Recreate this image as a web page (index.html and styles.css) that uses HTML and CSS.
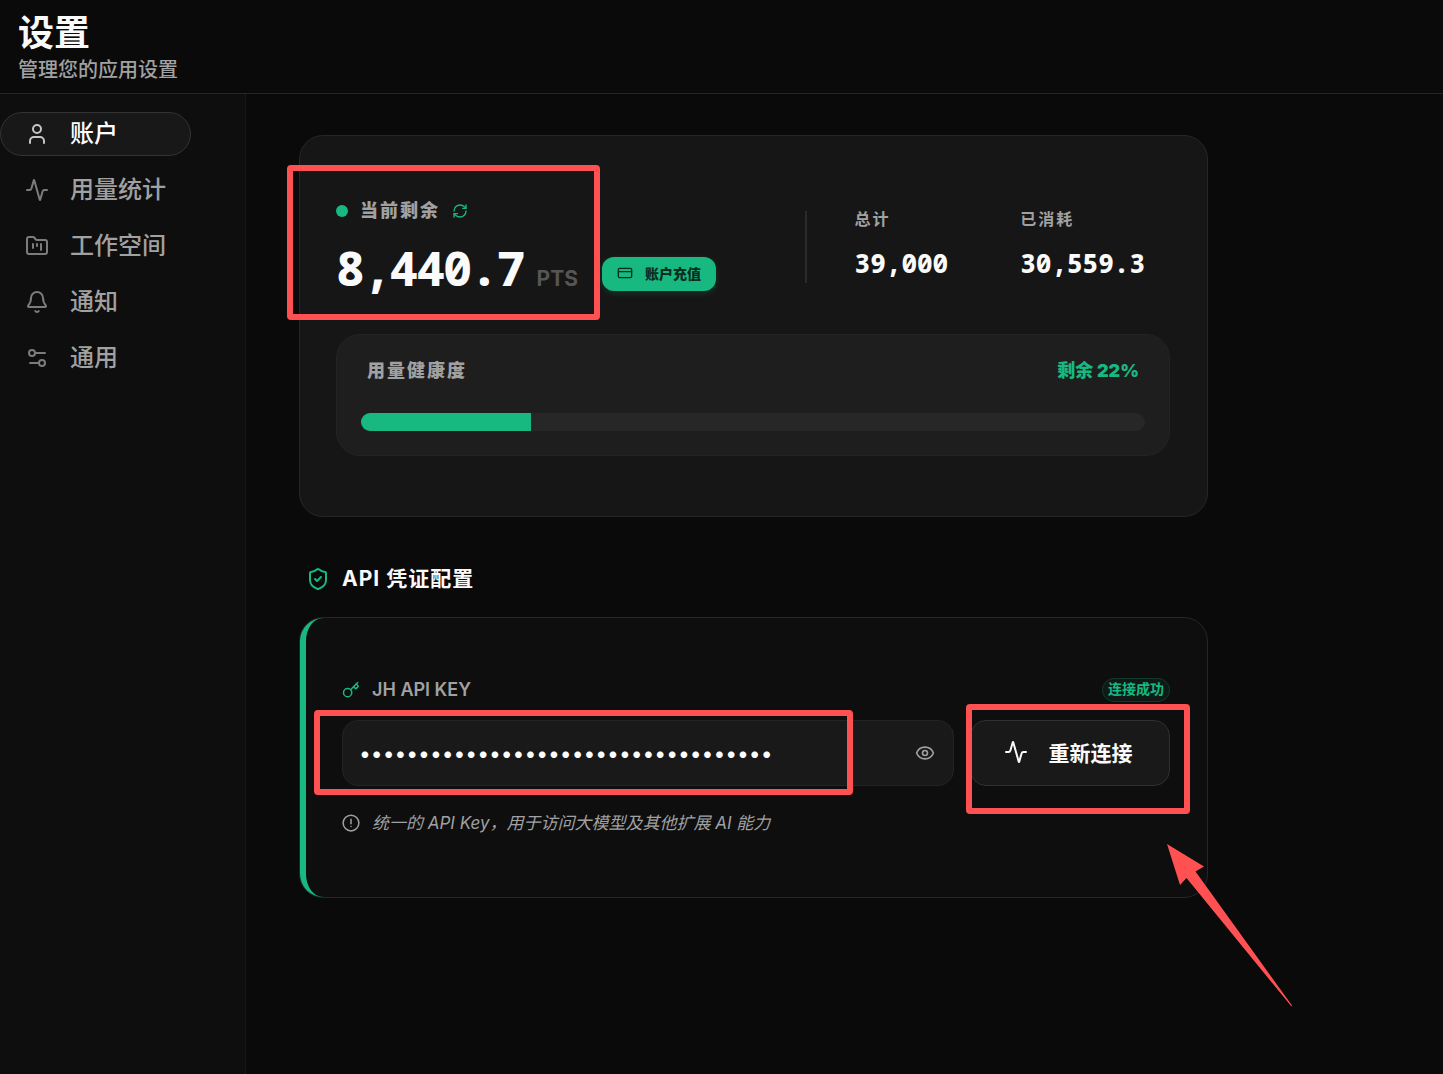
FILE: index.html
```html
<!DOCTYPE html>
<html lang="zh-CN">
<head>
<meta charset="utf-8">
<meta name="viewport" content="width=device-width, initial-scale=1">
<title>设置</title>
<link rel="stylesheet" href="styles.css">
</head>
<body>
<header class="header">
  <h1 class="title">设置</h1>
  <p class="subtitle">管理您的应用设置</p>
</header>
<div class="layout">
  <nav class="sidebar">
    <a class="nav-item nav-item-active" href="#account">
      <svg class="icon icon-lg" viewBox="0 0 24 24"><circle cx="12" cy="7" r="4"/><path d="M19 21v-2a4 4 0 0 0-4-4H9a4 4 0 0 0-4 4v2"/></svg>
      账户
    </a>
    <a class="nav-item" href="#usage">
      <svg class="icon icon-lg" viewBox="0 0 24 24"><path d="M22 12h-2.500a2 2 0 0 0-1.930 1.460l-2.350 8.360a.25.25 0 0 1-.48 0L9.240 2.180a.25.25 0 0 0-.48 0l-2.350 8.360A2 2 0 0 1 4.490 12H2"/></svg>
      用量统计
    </a>
    <a class="nav-item" href="#workspace">
      <svg class="icon icon-lg" viewBox="0 0 24 24"><path d="M4 20h16a2 2 0 0 0 2-2V8a2 2 0 0 0-2-2h-7.930a2 2 0 0 1-1.660-.9l-.82-1.200A2 2 0 0 0 7.930 3H4a2 2 0 0 0-2 2v13c0 1.100.9 2 2 2Z"/><path d="M8 10v4M12 10v2M16 10v6"/></svg>
      工作空间
    </a>
    <a class="nav-item" href="#notifications">
      <svg class="icon icon-lg" viewBox="0 0 24 24"><path d="M10.268 21a2 2 0 0 0 3.464 0"/><path d="M3.262 15.326A1 1 0 0 0 4 17h16a1 1 0 0 0 .74-1.673C19.410 13.956 18 12.499 18 8A6 6 0 0 0 6 8c0 4.499-1.411 5.956-2.738 7.326"/></svg>
      通知
    </a>
    <a class="nav-item" href="#general">
      <svg class="icon icon-lg" viewBox="0 0 24 24"><path d="M20 7h-9M14 17H5"/><circle cx="17" cy="17" r="3"/><circle cx="7" cy="7" r="3"/></svg>
      通用
    </a>
  </nav>
  <main class="main">
    <section class="card balance-card">
      <div class="balance-row">
        <div class="balance">
          <div class="balance-head">
            <span class="dot"></span>
            <span class="label label-strong">当前剩余</span>
            <button class="refresh" type="button" aria-label="刷新">
              <svg class="icon icon-xs" viewBox="0 0 24 24"><path d="M3 12a9 9 0 0 1 9-9 9.750 9.750 0 0 1 6.740 2.740L21 8"/><path d="M21 3v5h-5"/><path d="M21 12a9 9 0 0 1-9 9 9.750 9.750 0 0 1-6.740-2.740L3 16"/><path d="M8 16H3v5"/></svg>
            </button>
          </div>
          <div class="balance-line">
            <span class="amount">8,440.7</span>
            <span class="unit">PTS</span>
            <button class="recharge" type="button">
              <svg class="icon icon-xs" viewBox="0 0 24 24"><rect x="2" y="5" width="20" height="14" rx="2"/><path d="M2 10h20"/></svg>
              账户充值
            </button>
          </div>
        </div>
        <dl class="stats">
          <div class="stat"><dt class="stat-label">总计</dt><dd class="stat-value">39,000</dd></div>
          <div class="stat"><dt class="stat-label">已消耗</dt><dd class="stat-value">30,559.3</dd></div>
        </dl>
      </div>
      <div class="health">
        <div class="health-head">
          <span class="label label-strong">用量健康度</span>
          <span class="health-value">剩余 22%</span>
        </div>
        <div class="bar"><div class="bar-fill" style="width:21.64%"></div></div>
      </div>
    </section>

    <h2 class="section-title">
      <svg class="icon icon-lg" viewBox="0 0 24 24"><path d="M20 13c0 5-3.500 7.500-7.660 8.950a1 1 0 0 1-.67-.01C7.500 20.500 4 18 4 13V6a1 1 0 0 1 1-1c2 0 4.500-1.200 6.240-2.720a1.170 1.170 0 0 1 1.520 0C14.510 3.810 17 5 19 5a1 1 0 0 1 1 1z"/><path d="m9 12 2 2 4-4"/></svg>
      API 凭证配置
    </h2>

    <section class="card api-card">
      <div class="api-body">
        <div class="key-head">
          <svg class="icon icon-sm key-icon" viewBox="0 0 24 24"><path d="m15.500 7.500 2.300 2.300a1 1 0 0 0 1.400 0l2.100-2.100a1 1 0 0 0 0-1.400L19 4"/><path d="m21 2-9.600 9.600"/><circle cx="7.500" cy="15.500" r="5.500"/></svg>
          <label class="key-label" for="api-key">JH API KEY</label>
          <span class="badge">连接成功</span>
        </div>
        <div class="key-row">
          <div class="field">
            <input class="key-input" id="api-key" type="password" value="12345678901234567890123456789012345">
            <button class="eye" type="button" aria-label="显示密钥">
              <svg class="icon icon-md" viewBox="0 0 24 24"><path d="M2.062 12.348a1 1 0 0 1 0-.696 10.750 10.750 0 0 1 19.876 0 1 1 0 0 1 0 .696 10.750 10.750 0 0 1-19.876 0"/><circle cx="12" cy="12" r="3"/></svg>
            </button>
          </div>
          <button class="reconnect" type="button">
            <svg class="icon icon-lg" viewBox="0 0 24 24"><path d="M22 12h-2.500a2 2 0 0 0-1.930 1.460l-2.350 8.360a.25.25 0 0 1-.48 0L9.240 2.180a.25.25 0 0 0-.48 0l-2.350 8.360A2 2 0 0 1 4.490 12H2"/></svg>
            重新连接
          </button>
        </div>
        <p class="hint">
          <svg class="icon icon-sm" viewBox="0 0 24 24"><circle cx="12" cy="12" r="10.500"/><path d="M12 7v6M12 16.500v.1"/></svg>
          <span class="hint-text">统一的 API Key，用于访问大模型及其他扩展 AI 能力</span>
        </p>
      </div>
    </section>

    <svg class="marks" width="1100" height="940" viewBox="0 0 1100 940" aria-hidden="true">
      <g class="mark-box">
        <rect x="44" y="74" width="307" height="149" rx="1"/>
        <rect x="71" y="619" width="533" height="79" rx="1"/>
        <rect x="723" y="613" width="218" height="104" rx="1"/>
      </g>
      <path class="mark-arrow" d="M921 750 958 772.500 949.500 777.500 1046 911.500 1045.500 912.500 940.500 784 934 791Z"/>
    </svg>
  </main>
</div>
</body>
</html>
```
FILE: styles.css
```css
:root {
  --green: #18b981;
  --muted: #a1a1a1;
  --line: #262626;
  --sans: Inter, "Noto Sans CJK SC", sans-serif;
  --mono: Consolas, "Noto Sans Mono", "DejaVu Sans Mono", monospace;
}

* { box-sizing: border-box; }

body {
  display: flex;
  flex-direction: column;
  min-height: 100vh;
  margin: 0;
  background: #0a0a0a;
  color: #fafafa;
  font-family: var(--sans);
}

h1, h2, p, dl, dd { margin: 0; }

button, input { font-family: inherit; }

button { cursor: pointer; }

.icon {
  flex: none;
  fill: none;
  stroke: currentColor;
  stroke-width: 2;
  stroke-linecap: round;
  stroke-linejoin: round;
}
.icon-xs { width: 16px; height: 16px; }
.icon-sm { width: 18px; height: 18px; }
.icon-md { width: 20px; height: 20px; }
.icon-lg { width: 24px; height: 24px; }

.header {
  padding: 12px 18px 11px;
  border-bottom: 1px solid var(--line);
}
.title {
  margin-bottom: 4px;
  font-size: 36px;
  font-weight: 700;
  line-height: 42px;
}
.subtitle {
  color: var(--muted);
  font-size: 20px;
  font-weight: 500;
  line-height: 24px;
}

.layout {
  display: flex;
  flex: 1;
}

.sidebar {
  display: flex;
  flex: none;
  flex-direction: column;
  gap: 12px;
  width: 246px;
  padding: 18px 54px 18px 0;
  border-right: 1px solid #171717;
  background: #0e0e0e;
}
.nav-item {
  display: flex;
  align-items: center;
  gap: 21px;
  height: 44px;
  padding: 0 24px;
  border: 1px solid transparent;
  border-radius: 22px;
  color: var(--muted);
  font-size: 24px;
  font-weight: 500;
  line-height: 32px;
  text-decoration: none;
}
.nav-item .icon { opacity: 0.75; }
.nav-item-active {
  border-color: #333;
  background: #181818;
  color: #fff;
}

.main {
  position: relative;
  flex: 1;
  min-width: 0;
  padding: 41px 53px;
}

.card {
  max-width: 909px;
  border: 1px solid var(--line);
  border-radius: 24px;
}

.balance-card {
  padding: 60px 37px 60px 36px;
  background: #161616;
}
.balance-row {
  display: flex;
  justify-content: space-between;
}
.balance-head {
  display: flex;
  align-items: center;
  height: 30px;
}
.dot {
  width: 12px;
  height: 12px;
  margin-right: 12px;
  border-radius: 50%;
  background: var(--green);
}
.label {
  color: var(--muted);
  font-size: 18px;
  line-height: 24px;
  letter-spacing: 2px;
}
.label-strong { font-weight: 900; }
.refresh {
  display: flex;
  margin-left: 12px;
  padding: 0;
  border: 0;
  background: none;
  color: var(--green);
}
.balance-line {
  display: flex;
  align-items: baseline;
  height: 72px;
  padding-top: 14px;
}
.amount {
  font-family: var(--mono);
  font-size: 48px;
  font-weight: 800;
  line-height: 56px;
  letter-spacing: -2px;
}
.unit {
  margin-left: 13px;
  color: #555;
  font-size: 21px;
  font-weight: 700;
}
.recharge {
  display: flex;
  align-items: center;
  align-self: flex-end;
  gap: 12px;
  height: 34px;
  margin: 0 0 7px 24px;
  padding: 0 15px 2px;
  border: 0;
  border-radius: 12px;
  background: var(--green);
  box-shadow: 0 2px 6px #18b98133;
  color: #0a2e22;
  font-size: 14px;
  font-weight: 900;
}
.stats {
  display: flex;
  align-self: center;
  gap: 72px;
  height: 72px;
  padding: 0 25px 0 48px;
  border-left: 2px solid #2a2a2a;
}
.stat-label {
  margin-bottom: 20px;
  color: var(--muted);
  font-size: 16px;
  font-weight: 700;
  line-height: 16px;
  letter-spacing: 2px;
}
.stat-value {
  font-family: var(--mono);
  font-size: 26px;
  font-weight: 800;
  line-height: 32px;
}

.health {
  margin-top: 36px;
  padding: 24px;
  border: 1px solid #232323;
  border-radius: 24px;
  background: #1e1e1e;
}
.health-head {
  display: flex;
  justify-content: space-between;
  padding: 0 6px;
}
.health-value {
  color: var(--green);
  font-size: 18px;
  font-weight: 900;
  line-height: 24px;
}
.bar {
  height: 18px;
  margin-top: 30px;
  overflow: hidden;
  border-radius: 9px;
  background: #272727;
}
.bar-fill {
  height: 100%;
  background: var(--green);
}

.section-title {
  display: flex;
  align-items: center;
  gap: 12px;
  margin: 47px 0 23px 7px;
  font-size: 21px;
  font-weight: 700;
  line-height: 30px;
  letter-spacing: 1px;
}
.section-title .icon { color: var(--green); }

.api-card { background: #0e0e0e; }
.api-body {
  padding: 60px 37px 61px 36px;
  border-left: 6px solid var(--green);
  border-radius: 23px;
}
.key-head {
  display: flex;
  align-items: center;
  gap: 12px;
}
.key-icon { color: var(--green); }
.key-label {
  color: var(--muted);
  font-size: 18px;
  font-weight: 600;
  line-height: 24px;
}
.badge {
  margin-left: auto;
  padding: 0 5px 2px;
  border: 1px solid #123a2c;
  border-radius: 12px;
  background: #0f1a16;
  color: var(--green);
  font-size: 14px;
  font-weight: 700;
  line-height: 20px;
}
.key-row {
  display: flex;
  gap: 16px;
  margin-top: 18px;
}
.field {
  display: flex;
  flex: 1;
  align-items: center;
  min-width: 0;
  height: 66px;
  padding: 0 18px 0 16px;
  border: 1px solid #242424;
  border-radius: 16px;
  background: #191919;
}
.key-input {
  flex: 1;
  min-width: 0;
  padding: 0;
  border: 0;
  outline: 0;
  background: none;
  color: #fff;
  font-family: Inter, sans-serif;
  font-size: 21px;
}
.eye {
  display: flex;
  padding: 0;
  border: 0;
  background: none;
  color: var(--muted);
}
.reconnect {
  display: flex;
  flex: none;
  align-items: center;
  justify-content: center;
  gap: 21px;
  width: 200px;
  padding: 0 4px 2px 0;
  border: 1px solid #303030;
  border-radius: 16px;
  background: #191919;
  color: #fafafa;
  font-size: 21px;
  font-weight: 700;
}
.hint {
  display: flex;
  align-items: center;
  gap: 12px;
  margin-top: 24px;
  color: var(--muted);
}
.hint-text {
  font-size: 17px;
  font-style: italic;
  line-height: 26px;
}

/* Annotation layer drawn over the content */
.marks {
  position: absolute;
  top: 0;
  left: 0;
  pointer-events: none;
}
.mark-box {
  fill: none;
  stroke: #ff5151;
  stroke-width: 6;
}
.mark-arrow { fill: #ff5151; }
```
